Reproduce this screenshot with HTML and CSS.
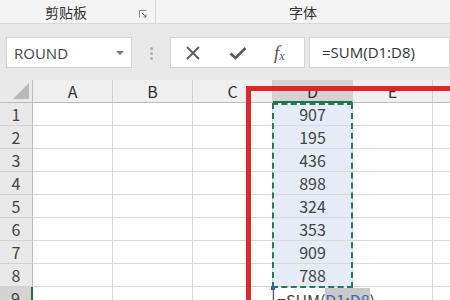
FILE: index.html
```html
<!DOCTYPE html>
<html>
  <head>
    <meta charset="utf-8">
    <title>SUM</title>
    <link rel="stylesheet" href="styles.css">
  </head>
  <body>

    <div class="ribbon">
      <div class="group clip">
        <span class="label">剪贴板</span>
        <svg class="launcher" width="8" height="8" viewBox="0 0 8 8">
          <path d="M0.5 7.5V0.5H7.5" fill="none" stroke="#8a8a8a" stroke-width="1"/>
          <path d="M3 3L7 7M7 4.5V7H4.5" fill="none" stroke="#6a6a6a" stroke-width="1"/>
        </svg>
      </div>
      <div class="group fonts"><span class="label">字体</span></div>
    </div>

    <div class="fbar">
      <div class="namebox">ROUND<span class="caret"></span></div>
      <div class="grip"><i></i><i></i><i></i></div>
      <div class="btns">
        <svg class="icon" width="16" height="16" viewBox="0 0 16 16">
          <path d="M2 2L14 14M14 2L2 14" stroke="#5a5a5a" stroke-width="1.8" fill="none"/>
        </svg>
        <svg class="icon" width="18" height="16" viewBox="0 0 18 16">
          <path d="M1.5 8.5L6.5 13L16.5 3" stroke="#5a5a5a" stroke-width="2.6" fill="none"/>
        </svg>
        <span class="fx">f<sub>x</sub></span>
      </div>
      <div class="formula">=SUM(D1:D8)</div>
    </div>

    <div class="sheet">
      <div class="row head">
        <div class="rh corner"><span class="tri"></span></div>
        <div class="ch">A</div>
        <div class="ch">B</div>
        <div class="ch">C</div>
        <div class="ch active">D</div>
        <div class="ch">E</div>
        <div class="ch">F</div>
      </div>
      <div class="row">
        <div class="rh">1</div><div class="c"></div><div class="c"></div><div class="c"></div>
        <div class="c sel">907</div><div class="c"></div><div class="c"></div>
      </div>
      <div class="row">
        <div class="rh">2</div><div class="c"></div><div class="c"></div><div class="c"></div>
        <div class="c sel">195</div><div class="c"></div><div class="c"></div>
      </div>
      <div class="row">
        <div class="rh">3</div><div class="c"></div><div class="c"></div><div class="c"></div>
        <div class="c sel">436</div><div class="c"></div><div class="c"></div>
      </div>
      <div class="row">
        <div class="rh">4</div><div class="c"></div><div class="c"></div><div class="c"></div>
        <div class="c sel">898</div><div class="c"></div><div class="c"></div>
      </div>
      <div class="row">
        <div class="rh">5</div><div class="c"></div><div class="c"></div><div class="c"></div>
        <div class="c sel">324</div><div class="c"></div><div class="c"></div>
      </div>
      <div class="row">
        <div class="rh">6</div><div class="c"></div><div class="c"></div><div class="c"></div>
        <div class="c sel">353</div><div class="c"></div><div class="c"></div>
      </div>
      <div class="row">
        <div class="rh">7</div><div class="c"></div><div class="c"></div><div class="c"></div>
        <div class="c sel">909</div><div class="c"></div><div class="c"></div>
      </div>
      <div class="row">
        <div class="rh">8</div><div class="c"></div><div class="c"></div><div class="c"></div>
        <div class="c sel">788</div><div class="c"></div><div class="c"></div>
      </div>
      <div class="row">
        <div class="rh active">9</div><div class="c"></div><div class="c"></div><div class="c"></div>
        <div class="c edit">=SUM(<span class="ref">D1:D8</span>)</div><div class="c"></div><div class="c"></div>
      </div>

      <div class="marquee"></div>
      <div class="handle"></div>
      <div class="annot"></div>
    </div>

  </body>
</html>
```

FILE: styles.css
```css
/* page
------------------------------- */

body
{
  margin: 0;
  width: 450px;
  height: 300px;
  overflow: hidden;
  background: #ffffff;
  color: #333;
  font-family: "Noto Sans CJK SC", "Noto Sans", sans-serif;
}

/* ribbon group labels
------------------------------- */

.ribbon
{
  display: flex;
  height: 24px;
  background: #f4f4f4;
  border-bottom: 1px solid #dadada;
  box-sizing: border-box;
}

.group
{
  display: flex;
  align-items: center;
  font-size: 14px;
  color: #333;
}

.clip
{
  width: 156px;
  box-sizing: border-box;
  padding-left: 45px;
  border-right: 1px solid #d6d6d6;
}

.launcher
{
  margin-left: auto;
  margin-right: 8px;
  margin-top: 4px;
}

.fonts
{
  flex: 1;
  justify-content: center;
}

/* formula bar
------------------------------- */

.fbar
{
  display: flex;
  align-items: flex-start;
  height: 56px;
  box-sizing: border-box;
  padding-top: 13px;
  background: #e8e8e8;
}

.namebox,
.btns,
.formula
{
  height: 31px;
  box-sizing: border-box;
  background: #fff;
  border: 1px solid #d4d4d4;
}

.namebox
{
  display: flex;
  align-items: center;
  width: 126px;
  margin-left: 6px;
  padding-left: 7px;
  font-family: "Open Sans", sans-serif;
  font-size: 15px;
  color: #444;
}

.caret
{
  margin-left: auto;
  margin-right: 7px;
  border-left: 4px solid transparent;
  border-right: 4px solid transparent;
  border-top: 4px solid #777;
}

.grip
{
  display: flex;
  flex-direction: column;
  gap: 2px;
  width: 38px;
  padding-top: 10px;
  align-items: center;
}

.grip i
{
  width: 3px;
  height: 3px;
  border-radius: 50%;
  background: #b0b0b0;
}

.btns
{
  display: flex;
  align-items: center;
  width: 135px;
  padding-left: 14px;
  gap: 28px;
}

.fx
{
  font-family: "Liberation Serif", serif;
  font-style: italic;
  font-size: 19px;
  color: #555;
  margin-left: -1px;
}

.fx sub
{
  font-size: 12px;
  vertical-align: -1px;
}

.formula
{
  flex: 1;
  margin-left: 4px;
  padding-left: 12px;
  line-height: 29px;
  font-family: "Open Sans", sans-serif;
  font-size: 15px;
  color: #333;
}

/* sheet grid
------------------------------- */

.sheet
{
  position: relative;
  height: 220px;
  overflow: hidden;
}

.row
{
  display: flex;
  height: 23px;
}

.row > div
{
  flex: none;
  box-sizing: border-box;
  height: 23px;
  line-height: 23px;
  text-align: center;
  font-size: 16px;
}

.rh
{
  width: 33px;
  background: #e9e9e9;
  border-right: 1px solid #bdbdbd;
  border-bottom: 1px solid #d2d2d2;
  color: #444;
}

.rh.active
{
  background: #d3d3d3;
  border-right: 2px solid #217346;
}

.ch
{
  width: 80px;
  background: #efefef;
  border-right: 1px solid #d0d0d0;
  border-bottom: 1px solid #bdbdbd;
  color: #333;
}

.ch.active
{
  background: #d3d3d3;
  border-bottom: 2px solid #217346;
}

.corner
{
  position: relative;
  border-bottom: 1px solid #bdbdbd;
}

.tri
{
  position: absolute;
  right: 3px;
  bottom: 3px;
  border-left: 16px solid transparent;
  border-bottom: 16px solid #b9b9b9;
}

.c
{
  width: 80px;
  border-right: 1px solid #d9d9d9;
  border-bottom: 1px solid #d9d9d9;
  color: #444;
}

.c.sel
{
  background: #e5ecf6;
}

.c.edit
{
  text-align: left;
  padding-left: 3px;
  white-space: nowrap;
  overflow: visible;
  line-height: 26px;
  border-left: 1px solid #555;
  color: #444;
}

.ref
{
  color: #3a67b5;
  background: #c9c9c9;
}

/* overlays
------------------------------- */

.marquee
{
  position: absolute;
  left: 272px;
  top: 23px;
  width: 81px;
  height: 185px;
  box-sizing: border-box;
  border: 2px dashed #237a5a;
}

.handle
{
  position: absolute;
  left: 271px;
  top: 206px;
  width: 4px;
  height: 4px;
  background: #2f63c0;
}

.annot
{
  position: absolute;
  left: 246px;
  top: 6px;
  right: -10px;
  bottom: -10px;
  border-top: 5px solid #dc2828;
  border-left: 5px solid #dc2828;
}
```
